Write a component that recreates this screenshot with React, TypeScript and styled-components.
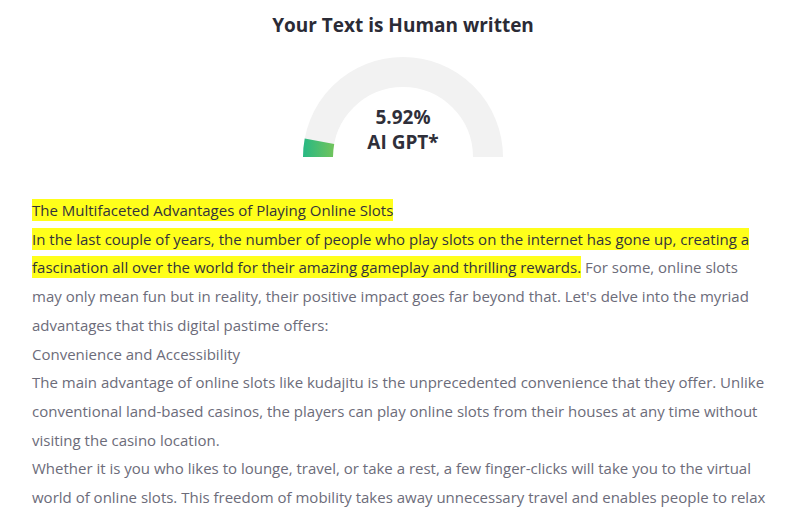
import React from "react";
import styled, { createGlobalStyle } from "styled-components";

const GlobalStyle = createGlobalStyle`
  body {
    margin: 0;
    background: #ffffff;
    font-family: "Open Sans", "Noto Sans", sans-serif;
  }
`;

const Page = styled.div`
  width: 800px;
  height: 516px;
  overflow: hidden;
  background: #ffffff;
`;

const Result = styled.section`
  display: flex;
  flex-direction: column;
  align-items: center;
  padding-top: 12px;
  padding-left: 6px;
`;

const Title = styled.h2`
  margin: 0;
  font-size: 19px;
  font-weight: 700;
  color: #2b2b36;
`;

const Gauge = styled.div`
  position: relative;
  width: 200px;
  height: 100px;
  margin-top: 19px;
`;

const GaugeLabel = styled.div`
  position: absolute;
  left: 0;
  right: 0;
  bottom: 2px;
  text-align: center;
  font-size: 19px;
  font-weight: 700;
  line-height: 25px;
  color: #2f2f3a;
`;

const Article = styled.div`
  padding: 39px 29px 0 32px;
  font-size: 15px;
  line-height: 28.7px;
  color: #6c6c7a;
`;

const Line = styled.div``;

const Mark = styled.span`
  background: #ffff1a;
  color: #33333b;
  padding: 1px 0;
`;

const GaugeArc: React.FC<{ percent: number }> = ({ percent }) => {
  const cx = 100;
  const cy = 100;
  const r = 85;
  const a = Math.PI - (percent / 100) * Math.PI;
  const x = cx + r * Math.cos(a);
  const y = cy - r * Math.sin(a);
  return (
    <svg width="200" height="100" viewBox="0 0 200 100">
      <defs>
        <linearGradient id="g" gradientUnits="userSpaceOnUse" x1="0" y1="0" x2="34" y2="0">
          <stop offset="0" stopColor="#27b884" />
          <stop offset="1" stopColor="#78c558" />
        </linearGradient>
      </defs>
      <path d={`M 15 100 A 85 85 0 0 1 185 100`} fill="none" stroke="#f2f2f2" strokeWidth="30" />
      <path d={`M 15 100 A 85 85 0 0 1 ${x} ${y}`} fill="none" stroke="url(#g)" strokeWidth="30" />
    </svg>
  );
};

export default function App() {
  return (
    <Page>
      <GlobalStyle />
      <Result>
        <Title>Your Text is Human written</Title>
        <Gauge>
          <GaugeArc percent={5.92} />
          <GaugeLabel>
            5.92%
            <br />
            AI GPT*
          </GaugeLabel>
        </Gauge>
      </Result>
      <Article>
        <Line>
          <Mark>The Multifaceted Advantages of Playing Online Slots</Mark>
        </Line>
        <Line>
          <Mark>
            In the last couple of years, the number of people who play slots on the internet has gone up, creating a
            fascination all over the world for their amazing gameplay and thrilling rewards.
          </Mark>{" "}
          For some, online slots may only mean fun but in reality, their positive impact goes far beyond that. Let's
          delve into the myriad advantages that this digital pastime offers:
        </Line>
        <Line>Convenience and Accessibility</Line>
        <Line>
          The main advantage of online slots like kudajitu is the unprecedented convenience that they offer. Unlike
          conventional land-based casinos, the players can play online slots from their houses at any time without
          visiting the casino location.
        </Line>
        <Line>
          Whether it is you who likes to lounge, travel, or take a rest, a few finger-clicks will take you to the
          virtual world of online slots. This freedom of mobility takes away unnecessary travel and enables people to
          relax
        </Line>
      </Article>
    </Page>
  );
}
